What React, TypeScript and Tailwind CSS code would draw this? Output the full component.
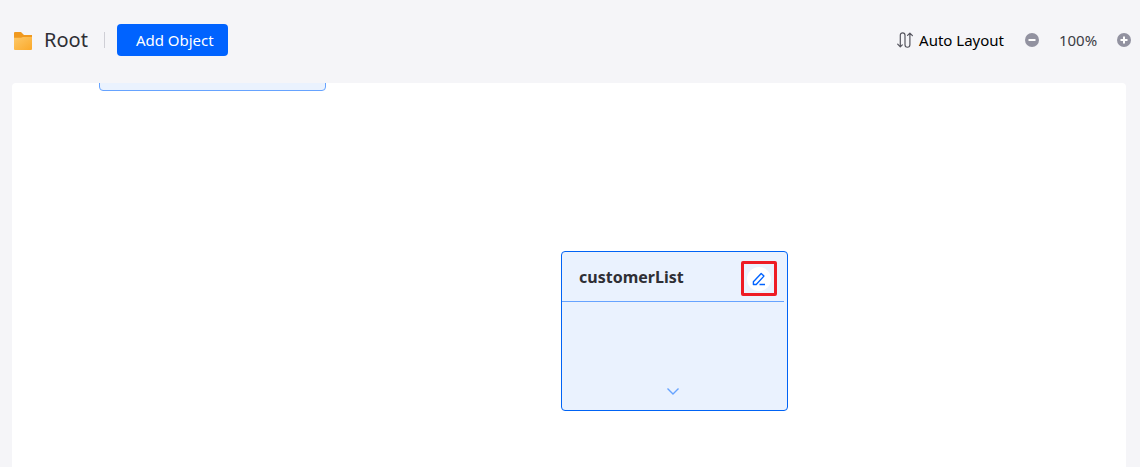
import type { ReactNode } from "react";

function FolderIcon() {
  return (
    <svg aria-hidden="true" className="shrink-0" width="18" height="20" viewBox="0 -2 18 20">
      <defs>
        <linearGradient id="folder-front" x1="0" y1="0" x2="1" y2="1">
          <stop offset="0" stopColor="#fdc868" />
          <stop offset="1" stopColor="#fba92a" />
        </linearGradient>
      </defs>
      <path d="M0 1a1 1 0 0 1 1-1h6l3 3h8v4H0z" fill="#f0991f" />
      <path d="M0 5.7h7L9 5h9v12a1 1 0 0 1-1 1H1a1 1 0 0 1-1-1z" fill="url(#folder-front)" />
    </svg>
  );
}

function AutoLayoutIcon() {
  return (
    <svg
      aria-hidden="true"
      className="shrink-0"
      width="16"
      height="16"
      viewBox="0 0 16 16"
      fill="none"
      stroke="#55555e"
      strokeWidth="1.2"
      strokeLinecap="round"
      strokeLinejoin="round"
    >
      <path d="M.7 12.2l2.6 2.6 2-2M3.3 14.5V3.2a2.3 2.3 0 0 1 4.7 0v9.6a2.3 2.3 0 0 0 4.9 0V1.4M10.6 3.4l2.3-2.3 2.5 2.5" />
    </svg>
  );
}

function ZoomButton({ label, children }: { label: string; children: ReactNode }) {
  return (
    <button type="button" aria-label={label} className="grid size-[14px] place-items-center">
      <svg width="14" height="14" viewBox="0 0 14 14" stroke="#fff" strokeWidth="2">
        <circle cx="7" cy="7" r="7" fill="#9292a0" stroke="none" />
        {children}
      </svg>
    </button>
  );
}

function ObjectNode({ name }: { name: string }) {
  return (
    <article className="absolute top-[168px] left-[549px] flex h-40 w-[227px] flex-col rounded border border-[#0063f5] bg-[#eaf2fe]">
      <header className="mr-[3px] flex h-[50px] items-center justify-between border-b border-[#66a3ff] pr-[7px] pl-[17px]">
        <h2 className="text-base font-bold text-[#2f2f35]">{name}</h2>
        <div className="mb-[5px] grid h-[35px] w-9 place-items-center self-end rounded-xs border-3 border-[#ee1c25]">
          <button
            type="button"
            aria-label={`Edit ${name}`}
            className="grid size-6 place-items-center rounded-full bg-white"
          >
            <svg
              width="14"
              height="14"
              viewBox="0 0 14 14"
              fill="none"
              stroke="#0063ff"
              strokeWidth="1.4"
              strokeLinejoin="round"
            >
              <path d="M1.4 12.5V9.7L9.2 1.5l2.7 2.6-7.7 8.4zM7.5 12.5h5.5" />
            </svg>
          </button>
        </div>
      </header>
      <button
        type="button"
        aria-label={`Expand ${name}`}
        className="mt-auto mb-3 mr-[3px] grid size-[14px] place-items-center self-center"
      >
        <svg width="14" height="14" viewBox="0 0 14 14" fill="none" stroke="#66a3ff" strokeWidth="1.4">
          <path d="M1.5 4.5L7 10l5.5-5.5" />
        </svg>
      </button>
    </article>
  );
}

export default function App() {
  return (
    <div className="flex min-h-screen flex-col bg-[#f5f5f8] font-['Noto_Sans','Open_Sans',sans-serif]">
      <header className="flex items-center justify-between pt-6 pr-[9px] pb-[27px] pl-[14px]">
        <div className="flex items-center">
          <FolderIcon />
          <h1 className="ml-3 text-xl text-[#2f2f35]">Root</h1>
          <span className="ml-4 h-4 w-px bg-[#cfcfd6]" />
          <button
            type="button"
            className="ml-3 h-8 rounded bg-[#0063ff] pr-[14px] pl-[19px] text-[15px] text-white"
          >
            Add Object
          </button>
        </div>
        <div className="flex items-center">
          <button type="button" className="flex items-center gap-[6px] text-[15px] text-black">
            <AutoLayoutIcon />
            Auto Layout
          </button>
          <div className="ml-[21px] flex items-center">
            <ZoomButton label="Zoom out">
              <path d="M3.5 7h7" />
            </ZoomButton>
            <span className="w-[78px] text-center text-[15px] text-[#3c3c44]">100%</span>
            <ZoomButton label="Zoom in">
              <path d="M3.5 7h7M7 3.5v7" />
            </ZoomButton>
          </div>
        </div>
      </header>
      <main className="relative mr-[14px] ml-3 flex-1 overflow-hidden rounded-t bg-white">
        <div className="absolute -top-[152px] left-[87px] h-40 w-[227px] rounded border border-[#66a3ff] bg-[#eaf2fe]" />
        <ObjectNode name="customerList" />
      </main>
    </div>
  );
}
